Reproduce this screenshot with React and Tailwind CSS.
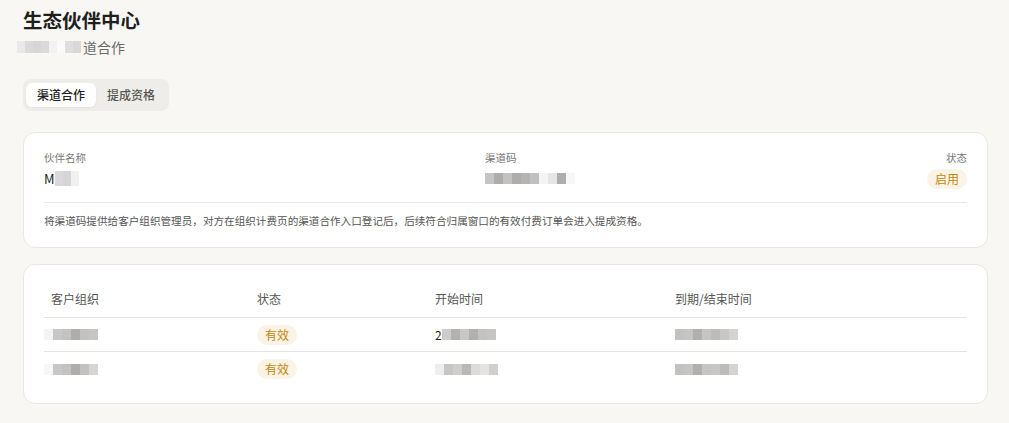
import React from 'react';

const FONT = { fontFamily: '"Noto Sans CJK SC", "Noto Sans", sans-serif' };

// pixelated redaction blocks
const Mosaic = ({ shades = [], size = 9, h = 11, className = '' }) => (
  <div className={`flex ${className}`}>
    {shades.map((c, i) => (
      <div key={i} style={{ width: size, height: h, background: c }} />
    ))}
  </div>
);

const Badge = ({ children }) => (
  <span className="inline-flex items-center justify-center h-[20px] px-[8px] rounded-full bg-[#fbf3e6] text-[#c4860c] text-[12px] leading-none">
    {children}
  </span>
);

const rows = [
  {
    org: ['#f4f4f4', '#c8c7c5', '#c3c2c0', '#aeadab', '#c3c2c0', '#c6c5c3'],
    start: ['#cdcccb', '#b3b2b0', '#c8c7c5', '#b1b0ae', '#c3c2c0', '#c6c5c3'],
    startLead: '2',
    end: ['#c3c2c0', '#c6c5c3', '#b0afad', '#c6c5c3', '#bdbcba', '#c8c7c5', '#d4d3d1'],
  },
  {
    org: ['#f7f7f7', '#c8c7c5', '#c3c2c0', '#aeadab', '#c3c2c0', '#d6d5d3'],
    start: ['#eeeeee', '#c7c6c4', '#cfcecd', '#b9b8b6', '#dcdbda', '#e5e4e3', '#d0cfce'],
    startLead: '',
    end: ['#c3c2c0', '#c6c5c3', '#b0afad', '#c6c5c3', '#c8c7c5', '#bdbcba', '#d4d3d1'],
  },
];

export default function App() {
  return (
    <div className="min-h-screen bg-[#f8f7f3] pl-[23px] pr-[21px] pt-[6px] pb-6" style={FONT}>
      <h1 className="text-[19.5px] leading-7 font-bold text-[#1f1f1f]">生态伙伴中心</h1>
      <div className="mt-[3px] flex items-center text-[14px] leading-5 text-[#6b6b6b]">
        <Mosaic
          className="-ml-[6px] mr-[2px]"
          size={8}
          h={12}
          shades={['#e9e9e9', '#dadada', '#d6d6d6', '#dadada', '#f2f2f2', '#fafafa', '#dedede', '#d8d8d8']}
        />
        <span>道合作</span>
      </div>

      <div className="mt-[22px] inline-flex px-[3px] py-[4px] rounded-lg bg-[#efedea]">
        <button className="h-[24px] px-[11px] rounded-md bg-white text-[12px] font-medium text-[#222] shadow-[0_1px_2px_rgba(0,0,0,0.04)]">
          渠道合作
        </button>
        <button className="h-[24px] px-[11px] rounded-md text-[12px] font-medium text-[#555]">提成资格</button>
      </div>

      <div className="mt-[21px] bg-white border border-[#e9e7e3] rounded-xl px-[20px] pt-[18px] pb-[18px]">
        <div className="flex justify-between">
          <div className="w-[441px]">
            <div className="text-[10.5px] leading-[14px] text-[#777]">伙伴名称</div>
            <div className="mt-[3px] h-[21px] flex items-center">
              <span className="text-[13px] text-[#222] leading-none">M</span>
              <Mosaic size={8} h={15} shades={['#d9d9d9', '#d5d5d5', '#f0f0f0']} />
            </div>
          </div>
          <div className="flex-1">
            <div className="text-[10.5px] leading-[14px] text-[#777]">渠道码</div>
            <div className="mt-[3px] h-[21px] flex items-center">
              <Mosaic
                size={9}
                h={11}
                shades={['#c6c5c3', '#aeadab', '#c3c2c0', '#aeadab', '#b5b4b2', '#c1c0be', '#f4f4f4', '#e6e6e6', '#aeadab', '#f7f7f7']}
              />
            </div>
          </div>
          <div className="flex flex-col items-end">
            <div className="text-[10.5px] leading-[14px] text-[#777]">状态</div>
            <div className="mt-[3px] h-[21px] flex items-center">
              <Badge>启用</Badge>
            </div>
          </div>
        </div>
        <div className="mt-[13px] border-t border-[#e9e7e3]" />
        <p className="mt-[10px] text-[10.6px] leading-4 text-[#555]">
          将渠道码提供给客户组织管理员，对方在组织计费页的渠道合作入口登记后，后续符合归属窗口的有效付费订单会进入提成资格。
        </p>
      </div>

      <div className="mt-[16px] bg-white border border-[#e9e7e3] rounded-xl px-[20px] pt-[20px] pb-[17px]">
        <div className="grid grid-cols-[206px_178px_240px_1fr] text-[12px] leading-4 text-[#555] border-b border-[#e6e4e1]">
          <div className="pl-[7px] pt-[6px] pb-[10px]">客户组织</div>
          <div className="pl-[7px] pt-[6px] pb-[10px]">状态</div>
          <div className="pl-[7px] pt-[6px] pb-[10px]">开始时间</div>
          <div className="pl-[7px] pt-[6px] pb-[10px]">到期/结束时间</div>
        </div>
        {rows.map((r, i) => (
          <div
            key={i}
            className={`grid grid-cols-[206px_178px_240px_1fr] h-[34px] items-center text-[12px] text-[#222] ${
              i < rows.length - 1 ? 'border-b border-[#e6e4e1]' : ''
            }`}
          >
            <div>
              <Mosaic size={9} h={11} shades={r.org} />
            </div>
            <div className="pl-[7px]">
              <Badge>有效</Badge>
            </div>
            <div className="pl-[7px] flex items-center">
              {r.startLead ? <span className="leading-none">{r.startLead}</span> : null}
              <Mosaic size={9} h={11} shades={r.start} />
            </div>
            <div className="pl-[7px]">
              <Mosaic size={9} h={11} shades={r.end} />
            </div>
          </div>
        ))}
      </div>
    </div>
  );
}
